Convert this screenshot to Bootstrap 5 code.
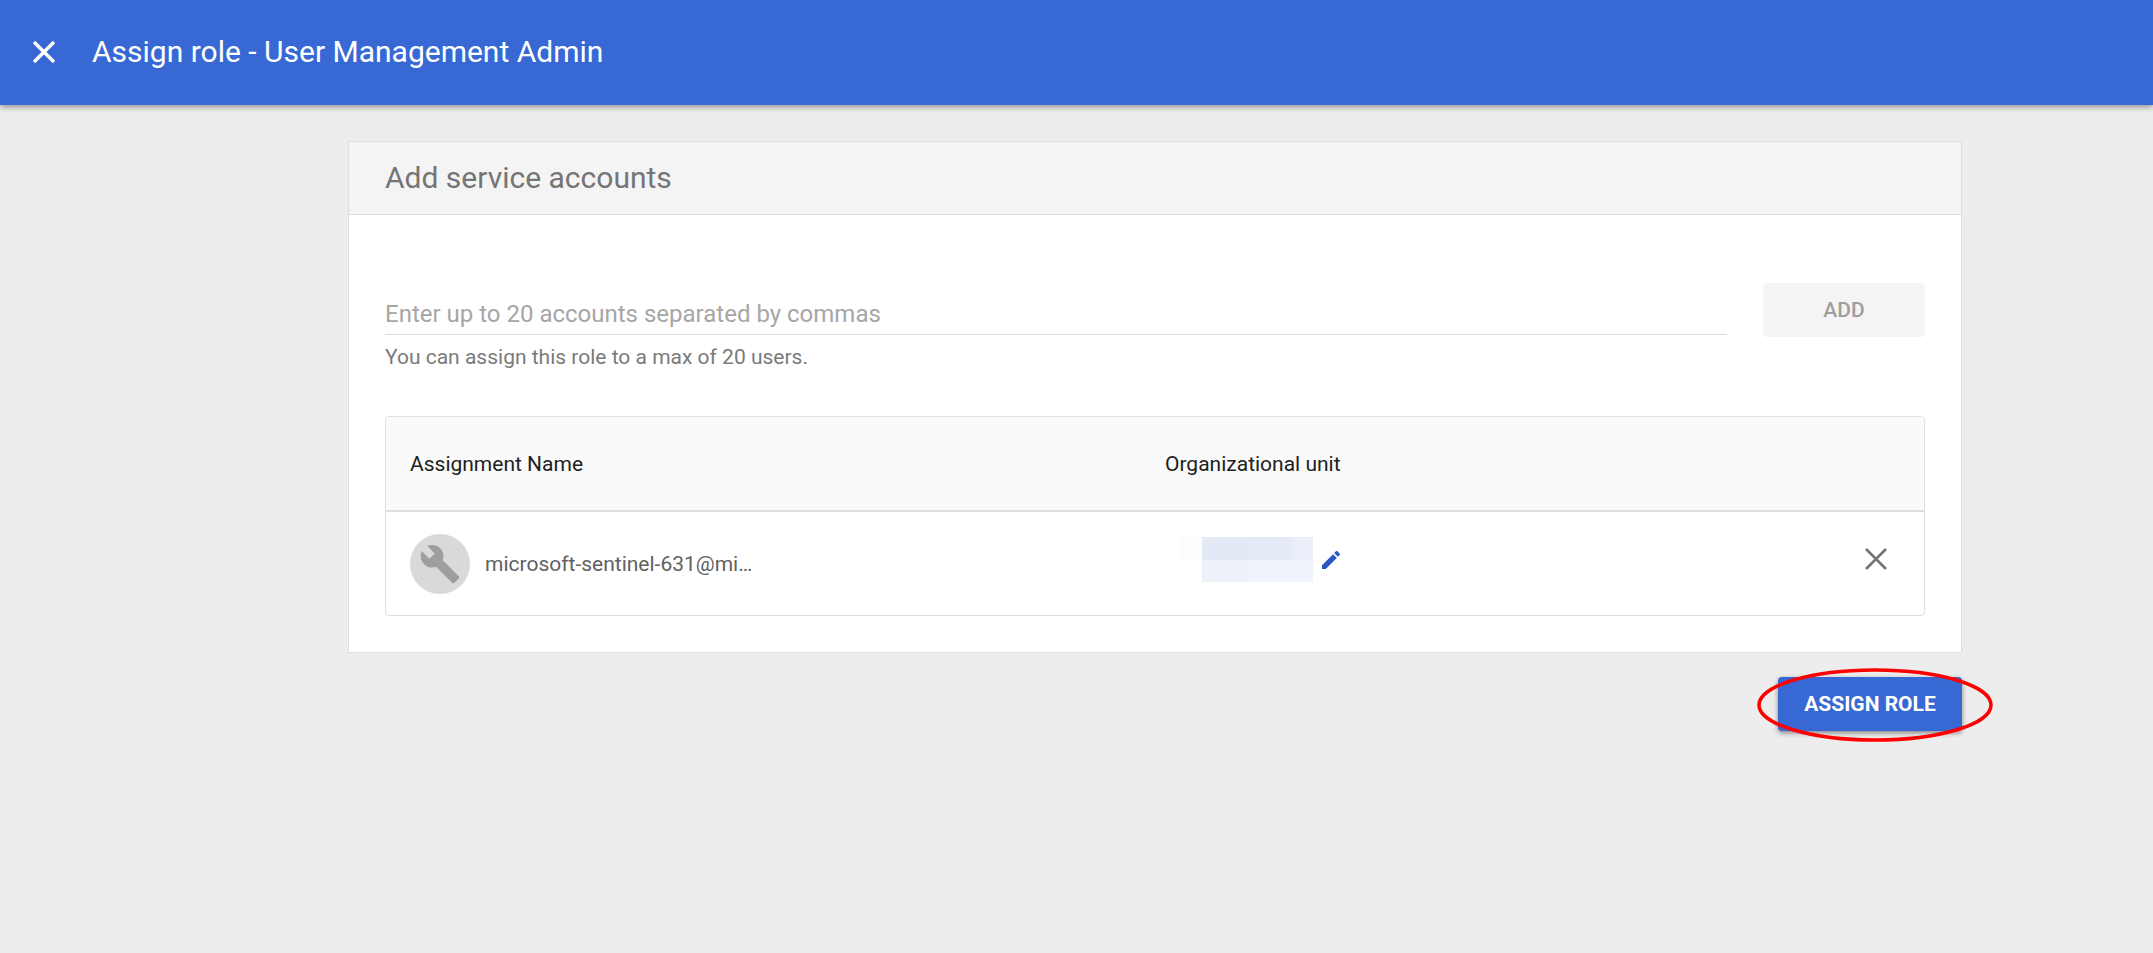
<!DOCTYPE html>
<html lang="en">
<head>
<meta charset="utf-8">
<meta name="viewport" content="width=device-width, initial-scale=1">
<title>Assign role - User Management Admin</title>
<link rel="stylesheet" href="https://cdn.jsdelivr.net/npm/bootstrap@5.3.0/dist/css/bootstrap.min.css">
<style>
  body { background: #ededed; font-family: Roboto, sans-serif; font-size: 21px; line-height: 24px; color: #757575; }
  svg { display: block; }
  .topbar { height: 105px; padding: 0 30px 2px; gap: 34px; background: #3768d3; box-shadow: 0 2px 6px rgba(0,0,0,.4); }
  .topbar h1 { font-size: 30px; line-height: 36px; }
  .plain { background: none; border: 0; padding: 0; }
  .page { padding: 36px 191px 40px 348px; }
  .panel { border: 1px solid #dedede; background: #fff; }
  .panel-top { background: #f4f4f4; border-bottom: 1px solid #dedede; padding: 18px 36px; }
  .panel-top h2 { font-size: 30px; line-height: 36px; }
  .panel-main { padding: 68px 36px 36px; }
  .entry { gap: 36px; }
  .accounts { border: 0; border-bottom: 1px solid #dedede; border-radius: 0; padding: 15px 0 4px; font-size: 24px; line-height: 32px; }
  .accounts::placeholder { color: #a6a6a6; opacity: 1; }
  .hint { padding-top: 10px; margin-bottom: 47px; color: #7a7a7a; }
  .btn { font-size: 21px; line-height: 24px; padding: 15px 0; border: 0; border-radius: 4px; font-weight: 500; }
  .btn-add, .btn-add:disabled { width: 162px; background: #f4f4f4; color: #9e9e9e; opacity: 1; }
  .btn-assign, .btn-assign:hover { width: 184px; background: #3768d3; color: #fff; font-weight: 700; box-shadow: 0 2px 5px rgba(0,0,0,.45); }
  .grid-box { border: 1px solid #dedede; border-radius: 4px; overflow: hidden; }
  .grid-box table { table-layout: fixed; width: 100%; }
  .grid-box th { height: 94px; padding: 0 24px; background: #fafafa; border-bottom: 2px solid #dedede; color: #212121; font-weight: 400; }
  .grid-box td { height: 104px; padding: 0 24px; color: #616161; }
  .c-name { width: 755px; }
  .c-act { width: 96px; }
  .avatar { width: 60px; height: 60px; background: #d9d9d9; margin-right: 15px; }
  .unit { gap: 6px; padding: 0 0 8px 14px; }
  .actions { padding-bottom: 10px; }
  .foot { padding-top: 24px; }
  .ring { position: absolute; left: -21px; top: -9px; pointer-events: none; }
</style>
</head>
<body>
<header class="topbar d-flex align-items-center text-white">
  <button class="plain text-white" type="button" aria-label="Close">
    <svg width="28" height="28" viewBox="0 0 28 28" fill="none" stroke="currentColor" stroke-width="3.400"><path d="M4 4 24 24M24 4 4 24"/></svg>
  </button>
  <h1 class="m-0 fw-normal">Assign role - User Management Admin</h1>
</header>
<main class="page">
  <section class="panel">
    <div class="panel-top"><h2 class="m-0 fw-normal">Add service accounts</h2></div>
    <div class="panel-main">
      <form class="entry d-flex align-items-start">
        <div class="flex-grow-1">
          <input id="accounts" class="accounts form-control bg-transparent shadow-none" type="text" placeholder="Enter up to 20 accounts separated by commas">
          <label class="hint d-block" for="accounts">You can assign this role to a max of 20 users.</label>
        </div>
        <button class="btn btn-add" type="button" disabled>ADD</button>
      </form>
      <div class="grid-box">
        <table>
          <thead>
            <tr><th class="c-name" scope="col">Assignment Name</th><th scope="col">Organizational unit</th><th class="c-act"></th></tr>
          </thead>
          <tbody>
            <tr>
              <td>
                <div class="d-flex align-items-center">
                  <span class="avatar rounded-circle d-flex align-items-center justify-content-center">
                    <svg width="42" height="42" viewBox="0 0 24 24" fill="#9e9e9e"><path d="M22.7 19l-9.100-9.100c.9-2.300.4-5-1.500-6.900-2-2-5-2.400-7.400-1.300L9 6 6 9 1.600 4.700C.4 7.100.9 10.100 2.900 12.100c1.900 1.900 4.600 2.400 6.900 1.500l9.100 9.100c.4.4 1 .4 1.400 0l2.300-2.300c.5-.4.5-1.100.1-1.400z"/></svg>
                  </span>
                  <span>microsoft-sentinel-631@mi…</span>
                </div>
              </td>
              <td>
                <div class="unit d-flex align-items-center">
                  <svg width="134" height="45" viewBox="-23 0 134 45" aria-hidden="true" shape-rendering="crispEdges"><path fill="#fdfdfe" d="M-23 0H0v23h-23z"/><path fill="#e3e9f5" d="M0 0h45v23H0z"/><path fill="#e4eaf6" d="M45 0h45v23H45z"/><path fill="#eaeef8" d="M90 0h21v23H90z"/><path fill="#eef1fa" d="M0 23h45v22H0z"/><path fill="#f0f3fc" d="M45 23h66v22H45z"/></svg>
                  <button class="plain" type="button" aria-label="Edit organizational unit">
                    <svg width="24" height="24" viewBox="0 0 24 24" fill="#2a56c6"><path d="M3 17.250V21h3.750L17.810 9.940l-3.750-3.750L3 17.250zM20.710 7.040c.39-.39.39-1.020 0-1.410l-2.340-2.340c-.39-.39-1.020-.39-1.410 0l-1.830 1.830 3.750 3.750 1.830-1.830z"/></svg>
                  </button>
                </div>
              </td>
              <td>
                <div class="actions">
                  <button class="plain d-block" type="button" aria-label="Remove">
                    <svg width="48" height="24" viewBox="0 0 48 24" fill="none" stroke="#757575" stroke-width="2.600"><path d="M14 2 34 22M34 2 14 22"/></svg>
                  </button>
                </div>
              </td>
            </tr>
          </tbody>
        </table>
      </div>
    </div>
  </section>
  <div class="foot d-flex justify-content-end">
    <div class="position-relative">
      <button class="btn btn-assign d-block" type="button">ASSIGN ROLE</button>
      <svg class="ring" width="236" height="74" viewBox="0 0 236 74" fill="none" stroke="#f00" stroke-width="3.500"><ellipse cx="118" cy="37" rx="116" ry="35"/></svg>
    </div>
  </div>
</main>
<script src="https://cdn.jsdelivr.net/npm/bootstrap@5.3.0/dist/js/bootstrap.bundle.min.js"></script>
</body>
</html>
